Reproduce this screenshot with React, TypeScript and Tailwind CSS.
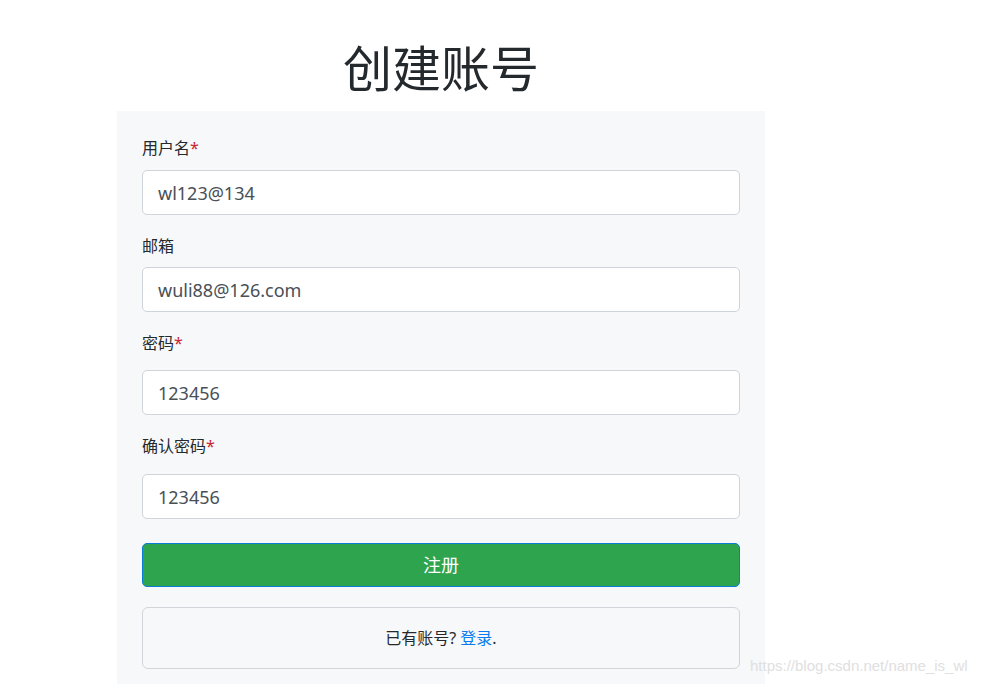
const cjk = "font-['Segoe_UI','Noto_Sans','Noto_Sans_CJK_SC',sans-serif]";

function Field({ label, required, value, gap }: { label: string; required?: boolean; value: string; gap: string }) {
  return (
    <div>
      <label className={`block text-[16px] leading-[24px] text-[#24292e] ${gap}`}>
        {label}
        {required && <span className="text-[#cb2431]">*</span>}
      </label>
      <input
        readOnly
        value={value}
        className="block w-full h-[45px] rounded-[5px] border border-[#ced4da] bg-white px-[15px] text-[18px] text-[#495057] outline-none"
      />
    </div>
  );
}

export default function App() {
  return (
    <div className={`relative min-h-[684px] bg-white ${cjk}`}>
      <div className="ml-[117px] w-[648px]">
        <h1 className="flex h-[111px] items-center justify-center pt-[20px] text-[49px] font-normal text-[#24292e] font-['Noto_Sans_CJK_SC',sans-serif]">
          创建账号
        </h1>
        <div className="bg-[#f6f8fa] px-[25px] pt-[25px] pb-[15px]">
          <div className="flex flex-col gap-[19px]">
            <Field label="用户名" required value="wl123@134" gap="mb-[10px]" />
            <Field label="邮箱" value="wuli88@126.com" gap="mb-[9px]" />
            <Field label="密码" required value="123456" gap="mb-[15px]" />
            <Field label="确认密码" required value="123456" gap="mb-[16px]" />
          </div>
          <button className="mt-[24px] flex h-[44px] w-full items-center justify-center rounded-[5px] border border-[#0a7cd6] bg-[#2ea44f] text-[18px] text-white">
            注册
          </button>
          <div className="mt-[20px] flex h-[62px] items-center justify-center rounded-[6px] border border-[#d1d5da] text-[16px] text-[#24292e]">
            已有账号? <span className="ml-[4px] text-[#0a7cf0]">登录</span>.
          </div>
        </div>
      </div>
      <div className="absolute left-[750px] top-[655px] text-[15px] text-[#e0e0e0] font-['Liberation_Sans',sans-serif]">
        https://blog.csdn.net/name_is_wl
      </div>
    </div>
  );
}
